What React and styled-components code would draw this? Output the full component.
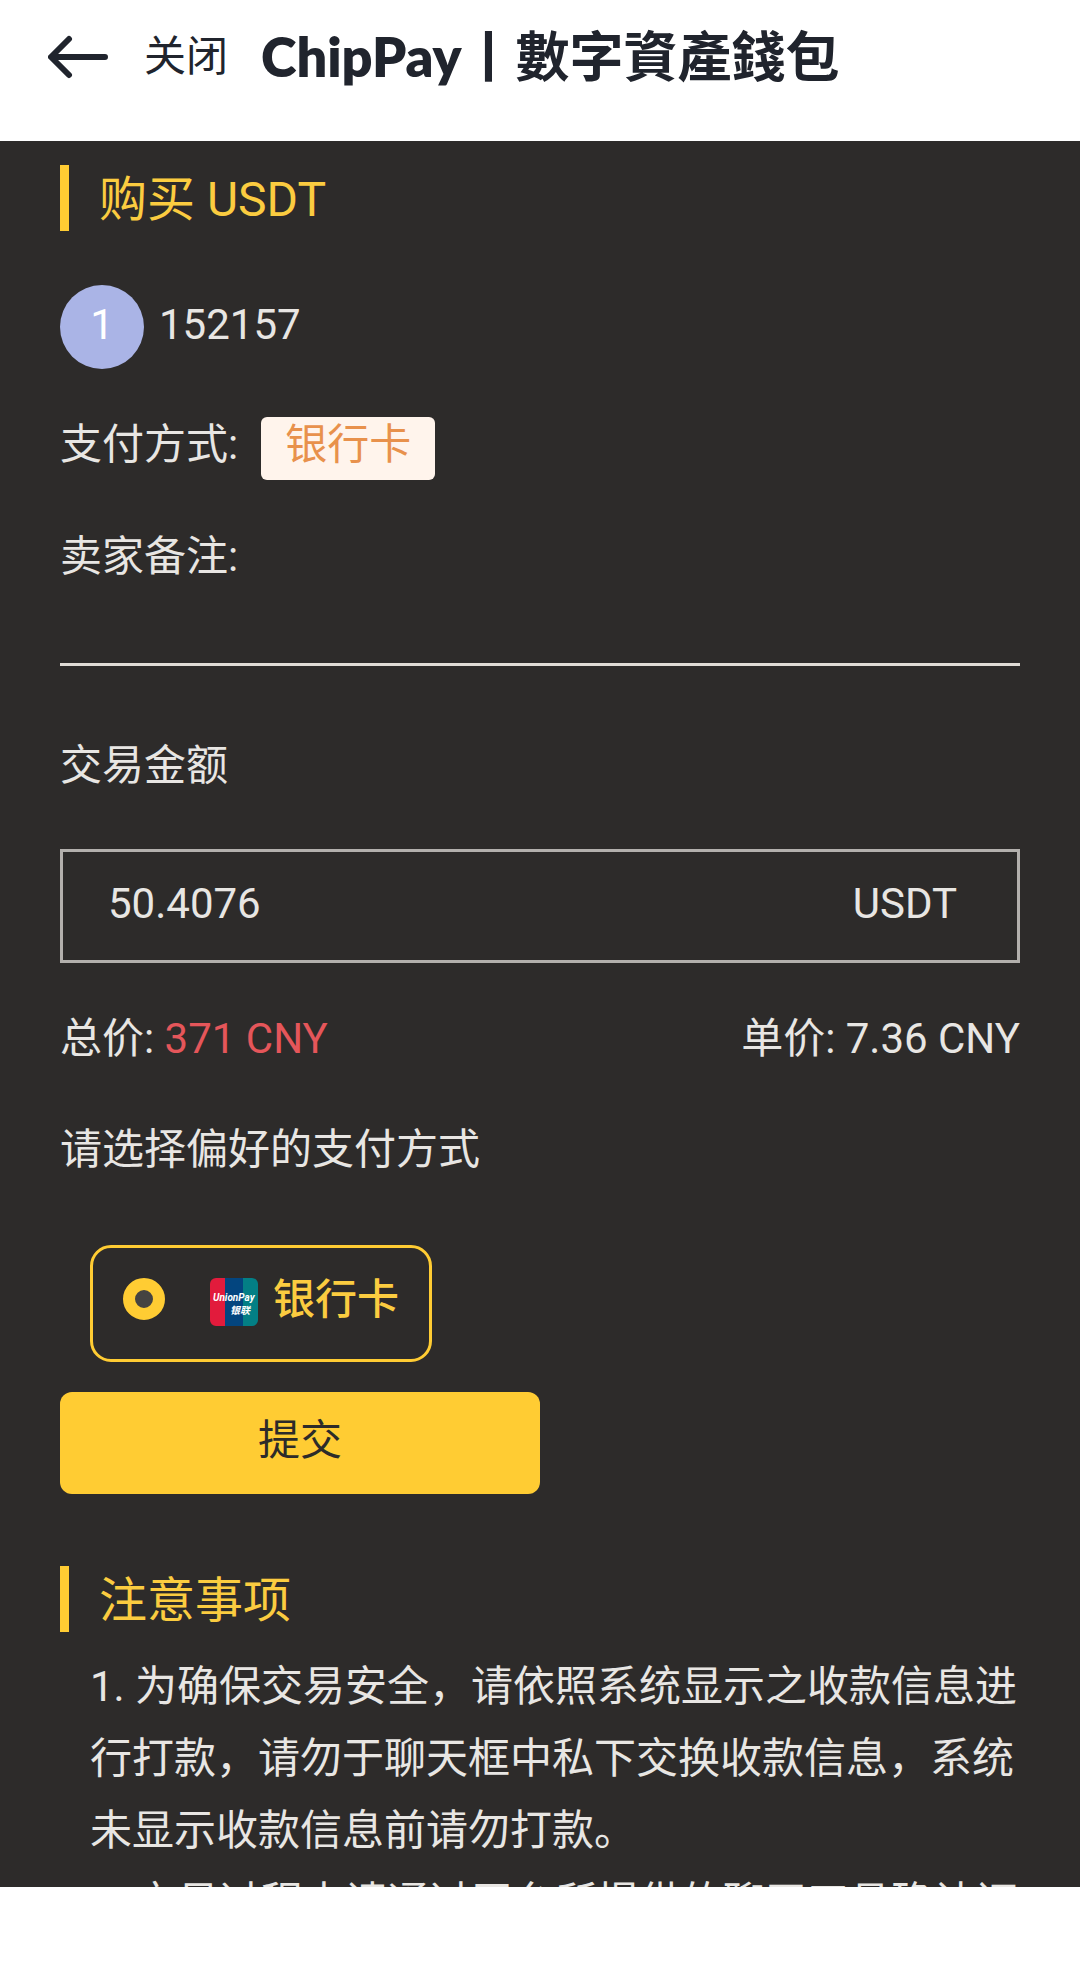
import React, { useState } from "react";
import styled, { createGlobalStyle } from "styled-components";

const color = {
  page: "#ffffff",
  ink: "#20242d",
  panel: "#2d2b2a",
  text: "#e8e6e3",
  rule: "#e0dcd6",
  frame: "#b3b0ad",
  accent: "#ffcc33",
  accentText: "#fbcc40",
  danger: "#e5565a",
  avatar: "#aab4e6",
  tag: "#fff4ec",
  tagText: "#e8914c",
};

const GlobalStyle = createGlobalStyle`
  *, *::before, *::after { box-sizing: border-box; }
  body {
    margin: 0;
    background: ${color.page};
    font-family: Roboto, "Noto Sans CJK SC", sans-serif;
    font-size: 42px;
    line-height: 72px;
  }
  h1, h2, p, ol { margin: 0; padding: 0; font-weight: 400; }
  button, input { font: inherit; color: inherit; }
`;

const Screen = styled.div`
  display: flex;
  flex-direction: column;
  height: 100vh;
`;

const Header = styled.header`
  display: flex;
  align-items: center;
  padding: 21px 48px 48px;
  color: ${color.ink};
`;

const PlainButton = styled.button`
  display: flex;
  align-items: center;
  padding: 0;
  border: 0;
  background: none;
  cursor: pointer;
`;

const CloseButton = styled(PlainButton)`
  margin: 0 33px 0 35px;
`;

const SiteTitle = styled.h1`
  font-family: Lato, "Noto Sans CJK TC", sans-serif;
  font-size: 54px;
  font-weight: 700;
  white-space: nowrap;
`;

const Brand = styled.span`
  font-weight: 800;
`;

const Panel = styled.main`
  flex: 1;
  min-height: 0;
  overflow: hidden;
  padding: 24px 60px 0;
  background: ${color.panel};
  color: ${color.text};
`;

const SystemBar = styled.footer`
  flex: none;
  height: 78px;
`;

const SectionTitle = styled.h2`
  padding: 4px 0 0 30px;
  border-left: 9px solid ${color.accent};
  color: ${color.accentText};
  font-size: 48px;
  line-height: 62px;
`;

const Seller = styled.div`
  display: flex;
  gap: 15px;
  margin-top: 54px;
  line-height: 80px;
`;

const Avatar = styled.span`
  width: 84px;
  height: 84px;
  border-radius: 50%;
  background: ${color.avatar};
  color: #ffffff;
  text-align: center;
`;

const Row = styled.div`
  display: flex;
  align-items: baseline;
  justify-content: ${(p) => (p.$spread ? "space-between" : "flex-start")};
  gap: 23px;
  margin-top: 40px;
`;

const Tag = styled.span`
  height: 63px;
  padding: 0 24px;
  border-radius: 6px;
  background: ${color.tag};
  color: ${color.tagText};
  line-height: 56px;
`;

const Divider = styled.hr`
  height: 3px;
  margin: 70px 0 64px;
  border: 0;
  background: ${color.rule};
`;

const FieldLabel = styled.label`
  display: block;
`;

const AmountBox = styled.div`
  display: flex;
  align-items: center;
  height: 114px;
  margin-top: 47px;
  padding: 0 60px 4px 45px;
  border: 3px solid ${color.frame};
`;

const AmountInput = styled.input`
  flex: 1;
  min-width: 0;
  height: 72px;
  padding: 0;
  border: 0;
  outline: 0;
  background: none;
`;

const Total = styled.span`
  color: ${color.danger};
`;

const Options = styled.fieldset`
  margin: 39px 0 0;
  padding: 0;
  border: 0;
`;

const Legend = styled.legend`
  padding: 0;
`;

const Option = styled.label`
  display: flex;
  align-items: flex-start;
  width: fit-content;
  height: 117px;
  margin: 59px 30px 30px;
  padding: 30px;
  border: 3px solid ${color.accent};
  border-radius: 21px;
  color: ${color.accentText};
  font-weight: 500;
  line-height: 44px;
  cursor: pointer;
`;

const Radio = styled.input`
  appearance: none;
  width: 42px;
  height: 42px;
  margin: 0 45px 0 0;
  border: 12px solid ${color.accent};
  border-radius: 50%;
  background: #454341;
`;

const CardLogo = styled.svg`
  width: 48px;
  height: 48px;
  margin-right: 15px;
`;

const SubmitButton = styled.button`
  display: block;
  width: 50%;
  height: 102px;
  padding: 0 0 4px;
  border: 0;
  border-radius: 12px;
  background: ${color.accent};
  color: ${color.panel};
  cursor: pointer;
`;

const Notices = styled.section`
  margin-top: 72px;
`;

const NoticeList = styled.ol`
  margin-top: 19px;
  padding-left: 30px;
  list-style: none;
`;

function BackArrow() {
  return (
    <svg width="61" height="44" viewBox="0 0 61 44" fill="none" stroke="currentColor" strokeWidth="6" strokeLinecap="round" strokeLinejoin="round" aria-hidden="true">
      <path d="M57 22H4M21 4L3 22L21 40" />
    </svg>
  );
}

function UnionPayLogo() {
  return (
    <CardLogo viewBox="0 0 48 48" aria-hidden="true">
      <defs>
        <clipPath id="card-shape">
          <rect width="48" height="48" rx="6" />
        </clipPath>
      </defs>
      <g clipPath="url(#card-shape)">
        <rect width="16" height="48" fill="#e21b3c" />
        <rect x="15" width="19" height="48" fill="#03457f" />
        <rect x="33" width="15" height="48" fill="#037f85" />
      </g>
      <g fill="#ffffff" fontStyle="italic" fontWeight="700">
        <text x="3" y="23" fontSize="10" fontFamily="Roboto, sans-serif">UnionPay</text>
        <text x="20" y="36" fontSize="10" fontFamily="Noto Sans CJK SC, sans-serif">银联</text>
      </g>
    </CardLogo>
  );
}

const notices = [
  "1. 为确保交易安全，请依照系统显示之收款信息进行打款，请勿于聊天框中私下交换收款信息，系统未显示收款信息前请勿打款。",
  "2. 交易过程中请通过平台所提供的聊天工具确认订",
];

export default function App() {
  const [amount, setAmount] = useState("50.4076");

  return (
    <Screen lang="zh-CN">
      <GlobalStyle />
      <Header>
        <PlainButton type="button" aria-label="返回">
          <BackArrow />
        </PlainButton>
        <CloseButton type="button">关闭</CloseButton>
        <SiteTitle lang="zh-TW">
          <Brand>ChipPay</Brand>丨數字資產錢包
        </SiteTitle>
      </Header>

      <Panel>
        <SectionTitle>购买 USDT</SectionTitle>
        <Seller>
          <Avatar>1</Avatar>
          <span>152157</span>
        </Seller>
        <Row>
          <span>支付方式:</span>
          <Tag>银行卡</Tag>
        </Row>
        <Row>
          <span>卖家备注:</span>
        </Row>

        <Divider />

        <FieldLabel htmlFor="amount">交易金额</FieldLabel>
        <AmountBox>
          <AmountInput
            id="amount"
            type="text"
            inputMode="decimal"
            value={amount}
            onChange={(e) => setAmount(e.target.value)}
          />
          <span>USDT</span>
        </AmountBox>
        <Row $spread>
          <span>
            总价: <Total>371 CNY</Total>
          </span>
          <span>单价: 7.36 CNY</span>
        </Row>

        <Options>
          <Legend>请选择偏好的支付方式</Legend>
          <Option>
            <Radio type="radio" name="method" defaultChecked />
            <UnionPayLogo />
            银行卡
          </Option>
        </Options>
        <SubmitButton type="button">提交</SubmitButton>

        <Notices>
          <SectionTitle>注意事项</SectionTitle>
          <NoticeList>
            {notices.map((text) => (
              <li key={text}>{text}</li>
            ))}
          </NoticeList>
        </Notices>
      </Panel>
      <SystemBar />
    </Screen>
  );
}
